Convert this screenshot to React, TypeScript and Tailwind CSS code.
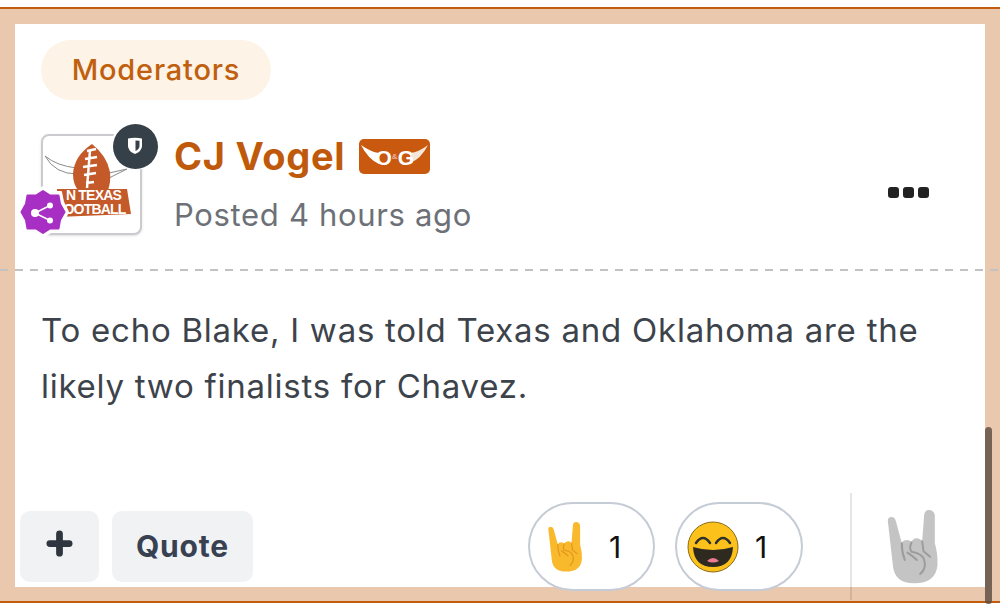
function Hand({ fill, line, className }: { fill: string; line: string; className: string }) {
  return (
    <svg viewBox="0 0 150 222" className={className}>
      <path
        fill={fill}
        d="M1 33Q0 22 12 21Q22 21 25 33L43 100Q46 90 58 90Q68 90 72 97Q76 84 90 85Q100 86 104 94L110 15Q112 0 124 0Q138 0 142 15L142 100Q151 130 150 165Q145 220 80 220Q20 220 16 165Z"
      />
      <path
        fill="none"
        stroke={line}
        strokeWidth="6"
        strokeLinecap="round"
        d="M43 100Q42 125 52 150M72 97Q64 115 72 125Q105 130 110 150Q118 175 98 192M104 94L108 124L128 140M60 128Q78 140 88 150"
      />
    </svg>
  );
}

function Avatar() {
  return (
    <div className="relative w-[101px] h-[101px] shrink-0">
      <div className="w-full h-full rounded-lg border-2 border-[#c9cbce] bg-white overflow-hidden relative shadow-sm">
        <svg viewBox="0 0 97 97" className="w-full h-full block">
          <path d="M2 20Q14 30 34 32L34 38Q12 38 2 20Z" fill="#fff" stroke="#8a8a8a" strokeWidth="1" />
          <path d="M66 37L84 33L66 42Z" fill="#fff" stroke="#8a8a8a" strokeWidth="1" />
          <path d="M49 8Q31 20 30 38Q30 48 35 54L65 54Q68 46 67 36Q64 20 49 8Z" fill="#c4592a" />
          <path
            d="M44 15L53 13M42 23L54 21M40 31L54 29M41 39L53 37M43 47L51 46M47 14L44 52"
            stroke="#fff"
            strokeWidth="2.5"
            fill="none"
          />
          <path d="M14 53L84 53L88 78L14 81Z" fill="#c4592a" />
        </svg>
        <div className="absolute left-0 top-[52px] w-full flex flex-col items-center text-white font-bold text-[14px] leading-[14px] font-['Liberation_Sans',sans-serif] whitespace-nowrap tracking-[-0.8px]">
          <span className="ml-[4px]">N TEXAS</span>
          <span className="ml-[6px]">OOTBALL</span>
        </div>
      </div>
      <div className="absolute -right-[17px] -top-[12px] w-[48px] h-[48px] rounded-full bg-white flex items-center justify-center">
        <div className="w-[45px] h-[45px] rounded-full bg-[#364049] flex items-center justify-center">
          <svg viewBox="0 0 16 18" className="w-[16px] h-[18px]">
            <path d="M1 1.5Q8 0 15 1.5L15 9Q15 14 8 17Q1 14 1 9Z" fill="#fff" />
            <path d="M8.5 3.5L12.5 3.8L12.5 9Q12.5 12 8.5 14Z" fill="#364049" />
          </svg>
        </div>
      </div>
      <div className="absolute -left-[24px] top-[52px]">
        <svg viewBox="0 0 52 52" className="w-[52px] h-[52px] block">
          <path
            d="M26 1L34 6L44 6L46 16L51 26L46 36L44 46L34 46L26 51L18 46L8 46L6 36L1 26L6 16L8 6L18 6Z"
            fill="#fff"
            stroke="#fff"
            strokeWidth="2"
            strokeLinejoin="round"
          />
          <path
            d="M26 5L33 9.5L41.5 9.5L43 18L47.5 26L43 34L41.5 42.5L33 42.5L26 47L19 42.5L10.5 42.5L9 34L4.5 26L9 18L10.5 9.5L19 9.5Z"
            fill="#a72fc4"
            stroke="#a72fc4"
            strokeWidth="2"
            strokeLinejoin="round"
          />
          <path d="M18 27L33 19.5M18 27L33 34.5" stroke="#fff" strokeWidth="1.5" />
          <circle cx="18" cy="27" r="4" fill="#fff" />
          <circle cx="33" cy="19.5" r="3" fill="#fff" />
          <circle cx="33" cy="34.5" r="3" fill="#fff" />
        </svg>
      </div>
    </div>
  );
}

function OgBadge() {
  return (
    <div className="relative w-[71px] h-[35px] rounded-[5px] bg-[#c8590f] flex items-center justify-center overflow-hidden">
      <svg viewBox="0 0 71 35" className="absolute inset-0 w-full h-full">
        <path d="M2 6Q12 13 20 14L20 25Q9 20 2 6Z" fill="#fff" />
        <path d="M69 6Q60 13 51 14L51 24Q62 20 69 6Z" fill="#f6e6da" />
      </svg>
      <span className="relative mt-[2px] flex items-center text-white font-black text-[21px] leading-none font-['Liberation_Sans',sans-serif]">
        <span>O</span>
        <span className="text-[8px] text-[#f0b0a0]">&amp;</span>
        <span>G</span>
      </span>
    </div>
  );
}

function Smiley() {
  return (
    <svg viewBox="0 0 52 52" className="w-[52px] h-[52px]">
      <circle cx="26" cy="26" r="25" fill="#fcc21b" stroke="#8a6a14" strokeWidth="1" />
      <path d="M9 22Q16 12 23 22M29 22Q36 12 43 22" fill="none" stroke="#2f2f2f" strokeWidth="2.5" strokeLinecap="round" />
      <path d="M6 26Q16 29 26 29Q36 29 46 26Q45 46 26 46Q7 46 6 26Z" fill="#2f2a20" />
      <path d="M20 40Q26 34 32 40Q26 43 20 40Z" fill="#ed7c93" />
    </svg>
  );
}

function Reaction({ icon, width }: { icon: React.ReactNode; width: string }) {
  return (
    <div className={`${width} h-[89px] rounded-full border-[2.5px] border-[#c6ccd6] bg-white flex items-center shrink-0`}>
      {icon}
      <span className="text-[30px] text-[#111] leading-none">1</span>
    </div>
  );
}

export default function App() {
  return (
    <div className="relative w-[1000px] h-[604px] bg-white overflow-hidden font-['Inter',sans-serif]">
      <div className="mt-[7px] h-[596px] border-y-[2px] border-[#c45c0e] bg-[#eac8ae] pt-[15px] pb-[14px] pl-[15px] pr-[15px]">
        <div className="relative h-[563px] bg-white flex flex-col">
          <div className="pl-[26px] pt-[16px]">
            <div className="inline-flex items-center h-[60px] w-[230px] justify-center rounded-full bg-[#fdf3e7] text-[#c0600f] text-[29px] tracking-[0.8px] font-medium">
              Moderators
            </div>
          </div>
          <div className="flex pl-[26px] pt-[34px] h-[170px]">
            <Avatar />
            <div className="ml-[32px] flex flex-col">
              <div className="flex items-center gap-[14px] h-[44px]">
                <span className="text-[38px] font-bold text-[#bf5a0c] leading-none tracking-[0.7px]">CJ Vogel</span>
                <OgBadge />
              </div>
              <span className="mt-[17px] text-[31px] tracking-[0.67px] leading-[40px] text-[#6d7177]">Posted 4 hours ago</span>
            </div>
            <div className="ml-auto mr-[56px] mt-[53px] h-[11px] flex gap-[4px]">
              <span className="w-[11px] h-[11px] rounded-[3px] bg-[#222]" />
              <span className="w-[11px] h-[11px] rounded-[3px] bg-[#222]" />
              <span className="w-[11px] h-[11px] rounded-[3px] bg-[#222]" />
            </div>
          </div>
          <div className="pl-[26px] pt-[32px] text-[33px] tracking-[0.75px] leading-[56px] text-[#3d434b]">
            <p>To echo Blake, I was told Texas and Oklahoma are the</p>
            <p>likely two finalists for Chavez.</p>
          </div>
          <div className="mt-auto flex items-start pl-[5px] pb-[5px]">
            <div className="flex gap-[13px]">
              <div className="w-[79px] h-[71px] rounded-[10px] bg-[#f1f2f4] flex items-center justify-center">
                <svg viewBox="0 0 28 28" className="w-[27px] h-[27px] mb-[6px]">
                  <path d="M14 4V24M4 14H24" stroke="#2f363f" strokeWidth="7" strokeLinecap="round" />
                </svg>
              </div>
              <div className="w-[141px] h-[71px] rounded-[10px] bg-[#f1f2f4] flex items-center justify-center text-[30px] tracking-[0.8px] font-bold text-[#374151]">
                Quote
              </div>
            </div>
          </div>
          <div className="absolute left-[513px] top-[478px] flex gap-[20px]">
            <Reaction
              width="w-[127px]"
              icon={<span className="ml-[17px] w-[36px] mr-[26px] flex"><Hand fill="#f9b92d" line="#e59a1f" className="w-[36px] h-[50px]" /></span>}
            />
            <Reaction
              width="w-[128px]"
              icon={<span className="ml-[10px] mr-[16px] flex"><Smiley /></span>}
            />
          </div>
          <div className="absolute left-[835px] top-[469px] w-[2px] h-[107px] bg-black/10" />
          <div className="absolute left-[872px] top-[486px]">
            <Hand fill="#c4c4c4" line="#9c9c9c" className="w-[51px] h-[74px] block" />
          </div>
        </div>
      </div>
      <div className="absolute left-0 right-0 top-[269px] h-[2px] bg-[repeating-linear-gradient(90deg,#c2c2c2_0,#c2c2c2_8px,transparent_8px,transparent_15px)]" />
      <div className="absolute left-[985px] top-[427px] w-[7px] h-[177px] rounded-full bg-[#5a4a40]/80" />
    </div>
  );
}
